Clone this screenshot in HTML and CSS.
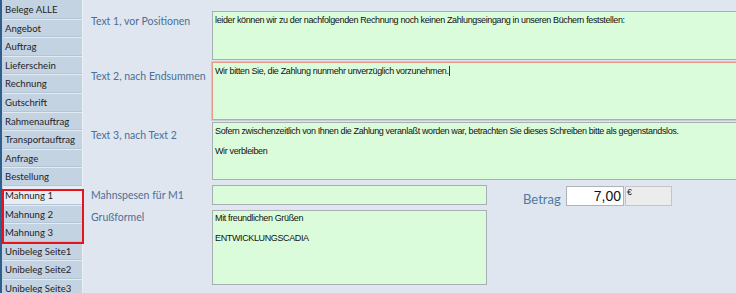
FILE: index.html
```html
<!DOCTYPE html>
<html lang="de">
<head>
  <meta charset="UTF-8">
  <title>Mahnung Texte</title>
  <link rel="stylesheet" href="styles.css">
</head>
<body>
  <div class="app">
    <div class="sidebar">
      <div class="nav-item">Belege ALLE</div>
      <div class="nav-item">Angebot</div>
      <div class="nav-item">Auftrag</div>
      <div class="nav-item">Lieferschein</div>
      <div class="nav-item">Rechnung</div>
      <div class="nav-item">Gutschrift</div>
      <div class="nav-item">Rahmenauftrag</div>
      <div class="nav-item">Transportauftrag</div>
      <div class="nav-item">Anfrage</div>
      <div class="nav-item">Bestellung</div>
      <div class="nav-group">
        <div class="nav-item active">Mahnung 1</div>
        <div class="nav-item">Mahnung 2</div>
        <div class="nav-item">Mahnung 3</div>
      </div>
      <div class="nav-item">Unibeleg Seite1</div>
      <div class="nav-item">Unibeleg Seite2</div>
      <div class="nav-item">Unibeleg Seite3</div>
    </div>

    <div class="main">
      <div class="row row-t1">
        <label class="label">Text 1, vor Positionen</label>
        <div class="memo memo-t1">leider können wir zu der nachfolgenden Rechnung noch keinen Zahlungseingang in unseren Büchern feststellen:</div>
      </div>
      <div class="row row-t2">
        <label class="label">Text 2, nach Endsummen</label>
        <div class="memo memo-focus">Wir bitten Sie, die Zahlung nunmehr unverzüglich vorzunehmen.<span class="caret"></span></div>
      </div>
      <div class="row row-t3">
        <label class="label">Text 3, nach Text 2</label>
        <div class="memo memo-t3">Sofern zwischenzeitlich von Ihnen die Zahlung veranlaßt worden war, betrachten Sie dieses Schreiben bitte als gegenstandslos.<br><br>Wir verbleiben</div>
      </div>

      <div class="bottom">
        <div class="bottom-left">
          <div class="row row-fee">
            <label class="label">Mahnspesen für M1</label>
            <div class="memo memo-line"></div>
          </div>
          <div class="row row-greet">
            <label class="label">Grußformel</label>
            <div class="memo memo-greet">Mit freundlichen Grüßen<br><br>ENTWICKLUNGSCADIA</div>
          </div>
        </div>
        <div class="amount">
          <span class="amount-label">Betrag</span>
          <div class="amount-value">7,00</div>
          <div class="amount-unit">€</div>
        </div>
      </div>
    </div>
  </div>
</body>
</html>
```

FILE: styles.css
```css
* {
  margin: 0;
  padding: 0;
  box-sizing: border-box;
}

body {
  width: 736px;
  height: 293px;
  overflow: hidden;
  background-color: #dfe6ef;
  font-family: 'Lato', sans-serif;
}

.app {
  display: flex;
  height: 293px;
}

/* left navigation */
.sidebar {
  width: 83px;
  flex-shrink: 0;
  border-left: 2px solid #2f5f8c;
  border-right: 1px solid #e9eff5;
  background-color: #c3d3e2;
  padding-top: 1px;
  padding-left: 1px;
}

.nav-item {
  height: 18.6px;
  line-height: 17px;
  font-size: 9.6px;
  color: #1f2328;
  padding-left: 2px;
  background-color: #c3d3e2;
  border-bottom: 1px solid #e2ebf3;
  box-shadow: inset 0 -1px 0 #b3c5d6;
  white-space: nowrap;
  overflow: hidden;
}

.nav-item.active {
  background-color: #e7edf3;
}

.nav-group {
  position: relative;
}

/* red marker drawn over the three Mahnung buttons */
.nav-group::after {
  content: '';
  position: absolute;
  top: 2px;
  bottom: -1px;
  left: -1px;
  right: -2px;
  border: 2px solid #e8141b;
}

/* main form */
.main {
  flex: 1;
  overflow: hidden;
  padding: 11px 0 0 8px;
  display: flex;
  flex-direction: column;
}

.row {
  display: flex;
  align-items: flex-start;
}

.label {
  width: 121px;
  flex-shrink: 0;
  font-size: 10.5px;
  line-height: 14px;
  color: #4b6f95;
}

.row-t1 .label { padding-top: 3px; }
.row-t2 .label { padding-top: 7px; }
.row-t3 .label { padding-top: 6px; }
.row-fee .label { padding-top: 3px; }
.row-greet .label { padding-top: 0; }

.memo {
  width: 580px;
  flex-shrink: 0;
  background-color: #dbfcdb;
  border: 1px solid #a9aeb4;
  font-family: 'Liberation Sans', Arial, sans-serif;
  font-size: 9px;
  letter-spacing: -0.37px;
  line-height: 10px;
  color: #111;
  padding: 3px 2px;
}

.memo-t1 {
  height: 49px;
}

.row-t2 {
  margin-top: 2px;
}

.memo-focus {
  height: 58px;
  border: 1px solid #e49a86;
  box-shadow: 0 0 0 1px #c7ccd2;
  padding-top: 3px;
}

.caret {
  display: inline-block;
  width: 1px;
  height: 10px;
  background-color: #333;
  vertical-align: -2px;
}

.row-t3 {
  margin-top: 2px;
}

.memo-t3 {
  height: 58px;
}

.bottom {
  display: flex;
  margin-top: 5px;
}

.row-greet {
  margin-top: 5px;
}

.memo-line {
  width: 275px;
  height: 20px;
}

.memo-greet {
  width: 275px;
  height: 75px;
  padding-top: 2px;
}

.amount {
  display: flex;
  align-items: flex-start;
  margin-left: 36px;
  padding-top: 1px;
}

.amount-label {
  font-size: 13px;
  color: #4d7aa6;
  margin-top: 5px;
  width: 43px;
}

.amount-value {
  width: 58px;
  height: 20px;
  background-color: #fff;
  border: 1px solid #aeb3b8;
  font-family: 'Liberation Sans', Arial, sans-serif;
  font-size: 14px;
  line-height: 18px;
  text-align: right;
  padding-right: 2px;
  color: #111;
}

.amount-unit {
  width: 47px;
  height: 20px;
  margin-left: 1px;
  background-color: #ececec;
  border: 1px solid #c2c6ca;
  font-family: 'Liberation Sans', Arial, sans-serif;
  font-size: 9px;
  line-height: 10px;
  padding-left: 1px;
  color: #222;
}
```
